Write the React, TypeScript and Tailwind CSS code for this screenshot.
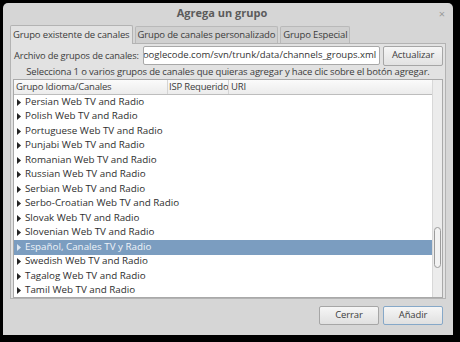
const groups = [
  'Persian Web TV and Radio',
  'Polish Web TV and Radio',
  'Portuguese Web TV and Radio',
  'Punjabi Web TV and Radio',
  'Romanian Web TV and Radio',
  'Russian Web TV and Radio',
  'Serbian Web TV and Radio',
  'Serbo-Croatian Web TV and Radio',
  'Slovak Web TV and Radio',
  'Slovenian Web TV and Radio',
  'Español, Canales TV y Radio',
  'Swedish Web TV and Radio',
  'Tagalog Web TV and Radio',
  'Tamil Web TV and Radio',
];

const selected = 'Español, Canales TV y Radio';

function Arrow({ light }: { light?: boolean }) {
  return (
    <svg width="4" height="7" viewBox="0 0 4 7" className="shrink-0">
      <path d="M0 0 L4 3.5 L0 7 Z" fill={light ? '#dbe6f1' : '#222'} />
    </svg>
  );
}

export default function App() {
  return (
    <div
      className="w-[460px] h-[342px] bg-black pt-[3px] pl-[3px] overflow-hidden text-[#3c3c3c] tracking-[-0.12px]"
      style={{ fontFamily: '"Open Sans", "Noto Sans", sans-serif' }}
    >
      <div className="w-[450px] h-[332px] bg-[#d6d6d6] rounded-t-[5px] flex flex-col">
        {/* Title bar */}
        <div className="h-[21px] flex items-center justify-center relative pr-[12px]">
          <span className="text-[11px] font-bold text-[#5b5b5b] tracking-normal">Agrega un grupo</span>
          <span className="absolute right-[8px] top-[3px] text-[11px] text-[#9a9a9a]">×</span>
        </div>

        {/* Tabs */}
        <div className="flex items-end px-[7px] h-[19px] gap-[2px] text-[9.5px] tracking-[-0.15px]">
          <div className="h-[19px] px-[2px] flex items-center whitespace-nowrap bg-[#e2e2e2] border border-b-0 border-[#b3b3b3] rounded-t-[2px] relative top-[1px]">
            Grupo existente de canales
          </div>
          <div className="h-[17px] px-[2px] flex items-center whitespace-nowrap bg-[#d0d0d0] border border-b-0 border-[#b9b9b9] rounded-t-[2px]">
            Grupo de canales personalizado
          </div>
          <div className="h-[17px] px-[2px] flex items-center whitespace-nowrap bg-[#d0d0d0] border border-b-0 border-[#b9b9b9] rounded-t-[2px]">
            Grupo Especial
          </div>
        </div>

        {/* Notebook page */}
        <div className="mx-[7px] h-[256px] bg-[#e2e2e2] border border-[#b3b3b3] flex flex-col px-[2px] pt-[1px] text-[9.5px]">
          <div className="flex items-center h-[21px]">
            <span className="pl-[1px] w-[128px] mr-[2px] shrink-0 whitespace-nowrap text-[9.3px] tracking-[-0.15px]">Archivo de grupos de canales:</span>
            <div className="w-[238px] h-[19px] bg-white border border-[#a8a8a8] rounded-[2px] flex items-center justify-end overflow-hidden pr-[3px]">
              <span className="whitespace-nowrap text-[#333] tracking-normal">http://tv-maxe.googlecode.com/svn/trunk/data/channels_groups.xml</span>
            </div>
            <div className="ml-[3px] w-[60px] h-[20px] border border-[#a6a6a6] rounded-[2px] bg-gradient-to-b from-[#f6f6f6] to-[#e2e2e2] flex items-center justify-center">
              Actualizar
            </div>
          </div>
          <div className="h-[12px] flex items-center justify-center whitespace-nowrap tracking-[-0.16px]">
            Selecciona 1 o varios grupos de canales que quieras agregar y hace clic sobre el botón agregar.
          </div>

          {/* Tree view */}
          <div className="mt-[1px] h-[219px] border border-[#a9a9a9] bg-white flex">
            <div className="flex-1 flex flex-col min-w-0">
              <div className="h-[15px] flex shrink-0 whitespace-nowrap border-b border-[#bdbdbd] bg-gradient-to-b from-[#fbfbfb] to-[#ececec] tracking-[-0.2px]">
                <div className="w-[154px] border-r border-[#d4d4d4] pl-[2px] flex items-center">Grupo Idioma/Canales</div>
                <div className="w-[61px] border-r border-[#d4d4d4] pl-[1px] flex items-center overflow-hidden">ISP Requerido</div>
                <div className="flex-1 pl-[2px] flex items-center">URI</div>
              </div>
              <div className="flex flex-col tracking-normal text-[9.8px]">
                {groups.map((g) => {
                  const sel = g === selected;
                  return (
                    <div
                      key={g}
                      className={`h-[14.5px] shrink-0 flex items-center gap-[4px] pl-[3px] ${
                        sel ? 'bg-[#7b9dc0] text-[#eef3f8]' : 'text-[#2e2e2e]'
                      }`}
                    >
                      <Arrow light={sel} />
                      <span className="whitespace-nowrap">{g}</span>
                    </div>
                  );
                })}
              </div>
            </div>
            {/* Scrollbar */}
            <div className="w-[10px] bg-[#ececec] border-l border-[#d8d8d8] relative">
              <div className="absolute left-[1px] top-[147px] w-[7px] h-[41px] rounded-[4px] border border-[#9b9b9b] bg-[#f2f2f2]" />
            </div>
          </div>
        </div>

        {/* Bottom buttons */}
        <div className="flex justify-end gap-[4px] pr-[10px] pt-[7px] text-[9.5px]">
          <div className="w-[60px] h-[19px] border border-[#a6a6a6] rounded-[2px] bg-gradient-to-b from-[#f6f6f6] to-[#e0e0e0] flex items-center justify-center">
            Cerrar
          </div>
          <div className="w-[60px] h-[19px] border border-[#86a8c8] rounded-[2px] bg-gradient-to-b from-[#f6f6f6] to-[#e0e0e0] flex items-center justify-center">
            Añadir
          </div>
        </div>
      </div>
    </div>
  );
}
